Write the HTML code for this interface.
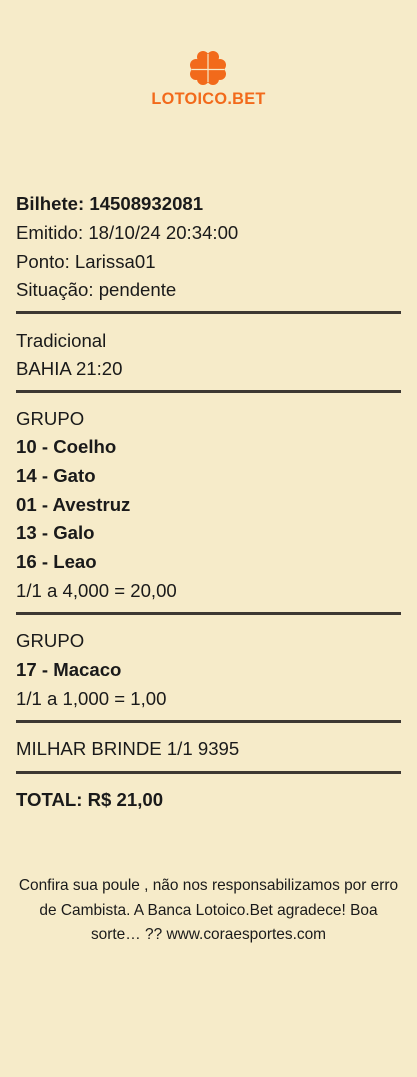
<!DOCTYPE html>
<html><head><style>
body{margin:0;width:417px;height:1077px;background:#f6ebc9;font-family:"Liberation Sans",sans-serif;color:#1a1a1a;position:relative;overflow:hidden}
.t{position:absolute;left:16px;font-size:18.6px;line-height:28px;white-space:nowrap}
.b{font-weight:bold}
.l{position:absolute;left:16px;width:385px;height:3px;background:#3d3832}
.f{position:absolute;left:0;width:417px;text-align:center;font-size:15.45px;line-height:24.5px;top:874px}
</style></head><body>
<svg style="position:absolute;left:189px;top:50px" width="38" height="36" viewBox="0 0 38 36">
<g fill="#f26a1b">
<circle cx="14" cy="7" r="6"/><circle cx="24" cy="7" r="6"/>
<circle cx="7" cy="15" r="6"/><circle cx="7" cy="24" r="6"/>
<circle cx="31" cy="15" r="6"/><circle cx="31" cy="24" r="6"/>
<circle cx="14" cy="29" r="6"/><circle cx="24" cy="29" r="6"/>
<rect x="10" y="10" width="18" height="16"/>
</g>
<g stroke="#f6ebc9" stroke-width="1.2"><line x1="19" y1="4" x2="19" y2="32"/><line x1="3" y1="19.5" x2="35" y2="19.5"/></g>
</svg>
<div style="position:absolute;left:0;width:417px;text-align:center;top:90px;font-size:16.3px;font-weight:bold;color:#f26a1b;letter-spacing:0.3px">LOTOICO.BET</div>
<div class="t b" style="top:190px">Bilhete: 14508932081</div>
<div class="t" style="top:219px">Emitido: 18/10/24 20:34:00</div>
<div class="t" style="top:248px">Ponto: Larissa01</div>
<div class="t" style="top:276px">Situação: pendente</div>
<div class="l" style="top:311px"></div>
<div class="t" style="top:327px">Tradicional</div>
<div class="t" style="top:355px">BAHIA 21:20</div>
<div class="l" style="top:390px"></div>
<div class="t" style="top:405px">GRUPO</div>
<div class="t b" style="top:433px">10 - Coelho</div>
<div class="t b" style="top:462px">14 - Gato</div>
<div class="t b" style="top:491px">01 - Avestruz</div>
<div class="t b" style="top:519px">13 - Galo</div>
<div class="t b" style="top:548px">16 - Leao</div>
<div class="t" style="top:577px">1/1 a 4,000 = 20,00</div>
<div class="l" style="top:612px"></div>
<div class="t" style="top:627px">GRUPO</div>
<div class="t b" style="top:656px">17 - Macaco</div>
<div class="t" style="top:685px">1/1 a 1,000 = 1,00</div>
<div class="l" style="top:720px"></div>
<div class="t" style="top:735px">MILHAR BRINDE 1/1 9395</div>
<div class="l" style="top:771px"></div>
<div class="t b" style="top:786px">TOTAL: R$ 21,00</div>
<div class="f">Confira sua poule , não nos responsabilizamos por erro<br>de Cambista. A Banca Lotoico.Bet agradece! Boa<br>sorte… ?? www.coraesportes.com</div>
</body></html>
